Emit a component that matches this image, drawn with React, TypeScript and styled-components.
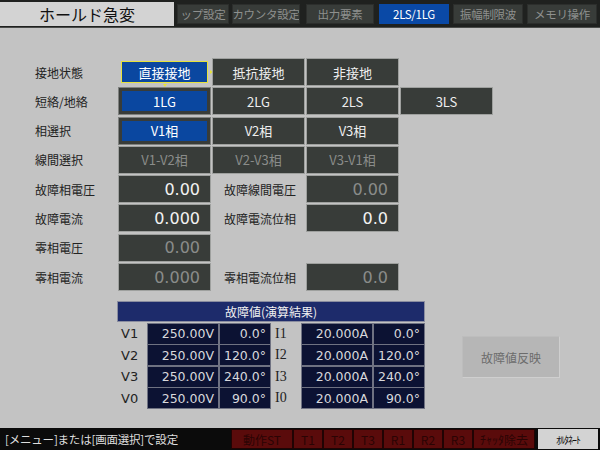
import styled, { createGlobalStyle, css } from "styled-components";

const GlobalStyle = createGlobalStyle`
    html, body {
        margin: 0;
        padding: 0;
        background: #c3c3c3;
    }
    body {
        font-family: "Noto Sans CJK JP", "DejaVu Sans", sans-serif;
    }
`;

const Screen = styled.div`
    width: 600px;
    height: 450px;
    display: flex;
    flex-direction: column;
    background: #c3c3c3;
    overflow: hidden;
`;

const TopBar = styled.div`
    height: 28px;
    background: #1f211f;
    display: flex;
    align-items: flex-start;
    box-sizing: border-box;
    border-bottom: 1px solid #4a4c4a;
`;

const TitleBox = styled.div`
    width: 174px;
    height: 24px;
    margin-top: 2px;
    background: #d3d3d3;
    color: #111;
    font-size: 16px;
    display: flex;
    align-items: center;
    justify-content: center;
    box-sizing: border-box;
`;

const Tab = styled.div<{ $w: number; $ml: number; $active?: boolean }>`
    width: ${(p) => p.$w}px;
    margin-left: ${(p) => p.$ml}px;
    height: 20px;
    margin-top: 4px;
    box-sizing: border-box;
    display: flex;
    align-items: center;
    justify-content: center;
    font-size: 11.5px;
    letter-spacing: -0.3px;
    white-space: nowrap;
    overflow: hidden;
    background: ${(p) => (p.$active ? "#0a49a6" : "#383c39")};
    color: ${(p) => (p.$active ? "#ffffff" : "#8e908e")};
    border: 1px solid ${(p) => (p.$active ? "#0a49a6" : "#2c2e2c")};
`;

const Main = styled.div`
    flex: 1;
    padding-top: 30px;
    box-sizing: border-box;
`;

const FormGrid = styled.div`
    display: grid;
    grid-template-columns: 117px repeat(4, 93px);
    grid-auto-rows: 28px;
    column-gap: 1px;
    row-gap: 1.3px;
`;

const RowLabel = styled.div`
    padding-left: 35px;
    display: flex;
    align-items: center;
    font-size: 12px;
    color: #222;
    white-space: nowrap;
`;

const SubLabel = styled.div`
    padding-left: 12px;
    display: flex;
    align-items: center;
    font-size: 12px;
    color: #222;
    white-space: nowrap;
`;

type BtnKind = "normal" | "selected" | "focused" | "disabled";

const Btn = styled.div<{ $kind: BtnKind }>`
    position: relative;
    box-sizing: border-box;
    display: flex;
    align-items: center;
    justify-content: center;
    font-size: 13px;
    background: #383c39;
    border: 1px solid #9ea09e;
    color: #eeeeee;
    ${(p) =>
        p.$kind === "disabled" &&
        css`
            color: #8a8c8a;
        `}
    ${(p) =>
        p.$kind === "selected" &&
        css`
            background: #0a47a0;
            border-color: #7f817f;
            box-shadow: inset 0 0 0 3px #383c39;
            color: #ffffff;
        `}
    ${(p) =>
        p.$kind === "focused" &&
        css`
            background: #0a47a0;
            border-color: #c3c3c3;
            box-shadow: inset 0 0 0 2px #c3c3c3, inset 0 0 0 3px #e6e23c;
            color: #ffffff;
            &::before {
                content: "";
                position: absolute;
                right: -3px;
                top: 11px;
                border-left: 3px solid #e6e23c;
                border-top: 2px solid transparent;
                border-bottom: 2px solid transparent;
            }
            &::after {
                content: "";
                position: absolute;
                bottom: -2px;
                left: 44px;
                border-top: 3px solid #e6e23c;
                border-left: 2px solid transparent;
                border-right: 2px solid transparent;
            }
        `}
`;

const Value = styled.div<{ $dim?: boolean }>`
    box-sizing: border-box;
    display: flex;
    align-items: center;
    justify-content: flex-end;
    padding-right: 10px;
    font-family: "DejaVu Sans", sans-serif;
    font-size: 16px;
    background: #383c39;
    border: 1px solid #9ea09e;
    color: ${(p) => (p.$dim ? "#8a8c8a" : "#f2f2f2")};
`;

const Blank = styled.div``;

const LowerArea = styled.div`
    display: flex;
    align-items: flex-start;
    margin-top: 10px;
`;

const ResultTable = styled.div`
    margin-left: 117px;
    width: 308px;
`;

const TableHead = styled.div`
    height: 21px;
    background: #1d2b6b;
    color: #f0f0f0;
    font-size: 12px;
    display: flex;
    align-items: center;
    justify-content: center;
    border: 1px solid #8a8da0;
    box-sizing: border-box;
`;

const TableBody = styled.div`
    display: grid;
    grid-template-columns: 30px 72px 52px 30px 72px 52px;
    grid-auto-rows: 21.5px;
    margin-top: 1px;
`;

const SymCell = styled.div<{ $serif?: boolean }>`
    display: flex;
    align-items: center;
    padding-left: 4px;
    font-size: ${(p) => (p.$serif ? 14 : 13)}px;
    color: #222;
    font-family: ${(p) =>
        p.$serif ? '"Liberation Serif", serif' : '"DejaVu Sans", sans-serif'};
`;

const DataCell = styled.div`
    box-sizing: border-box;
    display: flex;
    align-items: center;
    justify-content: flex-end;
    padding-right: 4px;
    background: #0c1233;
    border: 1px solid #6f7282;
    margin: -0.5px 0 0 -0.5px;
    color: #d8d8dc;
    font-family: "DejaVu Sans", sans-serif;
    font-size: 12.5px;
`;

const ApplyButton = styled.div`
    margin-left: 37px;
    margin-top: 35px;
    width: 98px;
    height: 42px;
    box-sizing: border-box;
    background: #b6b6b6;
    border: 1px solid #cfcfcf;
    border-top-color: #bdbdbd;
    border-left-color: #bdbdbd;
    color: #6c6c6c;
    font-size: 12px;
    display: flex;
    align-items: center;
    justify-content: center;
`;

const BottomBar = styled.div`
    height: 22px;
    background: #0b0b0b;
    display: flex;
    align-items: center;
`;

const Hint = styled.div`
    width: 231px;
    padding-left: 5px;
    box-sizing: border-box;
    color: #dedede;
    font-size: 11.5px;
    letter-spacing: -0.2px;
    white-space: nowrap;
`;

const RedKey = styled.div<{ $w: number }>`
    width: ${(p) => p.$w}px;
    height: 20px;
    box-sizing: border-box;
    background: #5a0b0b;
    border: 1px solid #200303;
    color: #2a0404;
    font-size: 12px;
    display: flex;
    align-items: center;
    justify-content: center;
    white-space: nowrap;
`;

const AltKey = styled.div`
    width: 60px;
    height: 20px;
    margin-left: 3px;
    background: #d3d3d3;
    color: #111;
    font-size: 10px;
    display: flex;
    align-items: center;
    justify-content: center;
    letter-spacing: -1px;
`;

const tabs = [
    { t: "ップ設定", w: 52, ml: 3 },
    { t: "カウンタ設定", w: 68, ml: 3 },
    { t: "出力要素", w: 68, ml: 6 },
    { t: "2LS/1LG", w: 70, ml: 5, active: true },
    { t: "振幅制限波", w: 70, ml: 4 },
    { t: "メモリ操作", w: 70, ml: 4 },
];

const results = [
    ["V1", "250.00V", "0.0°", "I1", "20.000A", "0.0°"],
    ["V2", "250.00V", "120.0°", "I2", "20.000A", "120.0°"],
    ["V3", "250.00V", "240.0°", "I3", "20.000A", "240.0°"],
    ["V0", "250.00V", "90.0°", "I0", "20.000A", "90.0°"],
];

const keys = [
    { t: "動作ST", w: 62 },
    { t: "T1", w: 30 },
    { t: "T2", w: 30 },
    { t: "T3", w: 30 },
    { t: "R1", w: 30 },
    { t: "R2", w: 30 },
    { t: "R3", w: 30 },
    { t: "ﾁｬｯﾀ除去", w: 62 },
];

const App = () => {
    return (
        <Screen>
            <GlobalStyle />
            <TopBar>
                <TitleBox>ホールド急変</TitleBox>
                {tabs.map((tab) => (
                    <Tab key={tab.t} $w={tab.w} $ml={tab.ml} $active={tab.active}>
                        {tab.t}
                    </Tab>
                ))}
            </TopBar>
            <Main>
                <FormGrid>
                    <RowLabel>接地状態</RowLabel>
                    <Btn $kind="focused">直接接地</Btn>
                    <Btn $kind="normal">抵抗接地</Btn>
                    <Btn $kind="normal">非接地</Btn>
                    <Blank />

                    <RowLabel>短絡/地絡</RowLabel>
                    <Btn $kind="selected">1LG</Btn>
                    <Btn $kind="normal">2LG</Btn>
                    <Btn $kind="normal">2LS</Btn>
                    <Btn $kind="normal">3LS</Btn>

                    <RowLabel>相選択</RowLabel>
                    <Btn $kind="selected">V1相</Btn>
                    <Btn $kind="normal">V2相</Btn>
                    <Btn $kind="normal">V3相</Btn>
                    <Blank />

                    <RowLabel>線間選択</RowLabel>
                    <Btn $kind="disabled">V1-V2相</Btn>
                    <Btn $kind="disabled">V2-V3相</Btn>
                    <Btn $kind="disabled">V3-V1相</Btn>
                    <Blank />

                    <RowLabel>故障相電圧</RowLabel>
                    <Value>0.00</Value>
                    <SubLabel>故障線間電圧</SubLabel>
                    <Value $dim>0.00</Value>
                    <Blank />

                    <RowLabel>故障電流</RowLabel>
                    <Value>0.000</Value>
                    <SubLabel>故障電流位相</SubLabel>
                    <Value>0.0</Value>
                    <Blank />

                    <RowLabel>零相電圧</RowLabel>
                    <Value $dim>0.00</Value>
                    <Blank />
                    <Blank />
                    <Blank />

                    <RowLabel>零相電流</RowLabel>
                    <Value $dim>0.000</Value>
                    <SubLabel>零相電流位相</SubLabel>
                    <Value $dim>0.0</Value>
                    <Blank />
                </FormGrid>
                <LowerArea>
                    <ResultTable>
                        <TableHead>故障値(演算結果)</TableHead>
                        <TableBody>
                            {results.map((r) => [
                                <SymCell key={r[0]}>{r[0]}</SymCell>,
                                <DataCell key={r[0] + "a"}>{r[1]}</DataCell>,
                                <DataCell key={r[0] + "b"}>{r[2]}</DataCell>,
                                <SymCell key={r[3]} $serif>
                                    {r[3]}
                                </SymCell>,
                                <DataCell key={r[3] + "a"}>{r[4]}</DataCell>,
                                <DataCell key={r[3] + "b"}>{r[5]}</DataCell>,
                            ])}
                        </TableBody>
                    </ResultTable>
                    <ApplyButton>故障値反映</ApplyButton>
                </LowerArea>
            </Main>
            <BottomBar>
                <Hint>[メニュー]または[画面選択]で設定</Hint>
                {keys.map((k) => (
                    <RedKey key={k.t} $w={k.w}>
                        {k.t}
                    </RedKey>
                ))}
                <AltKey>ｵﾙﾀﾈｰﾄ</AltKey>
            </BottomBar>
        </Screen>
    );
};

export default App;
